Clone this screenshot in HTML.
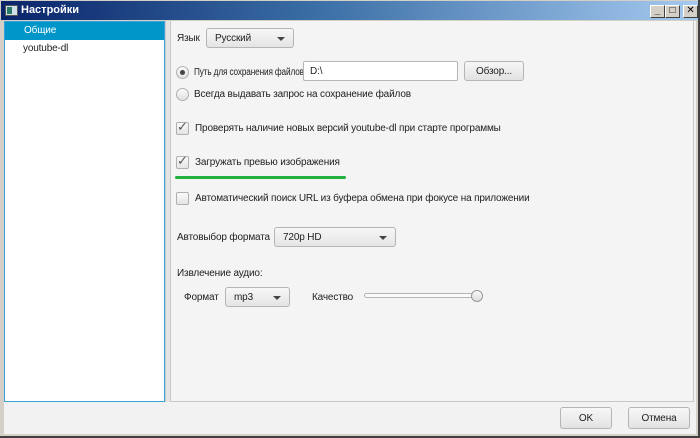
<!DOCTYPE html>
<html><head><meta charset="utf-8"><style>
*{box-sizing:border-box;margin:0;padding:0}
body{width:700px;height:438px;overflow:hidden;background:#d4d0c8;font-family:"Liberation Sans","DejaVu Sans",sans-serif;font-size:10px;letter-spacing:-0.15px;color:#222;position:relative}
.a{position:absolute}
.title{left:0;top:0;width:700px;height:20px;background:linear-gradient(90deg,#0a246a 0%,#3a6ea5 45%,#a6caf0 100%);border:1px solid #d4d0c8;border-bottom:none}
.title span{position:absolute;left:20px;top:3px;color:#fff;font-weight:bold;font-size:11px;letter-spacing:0}
.wb{top:4px;width:15px;height:13px;background:#d4d0c8;border:1px solid;border-color:#fff #404040 #404040 #fff;font-size:10px;line-height:10px;text-align:center;color:#000;font-weight:bold}
.body{left:4px;top:21px;width:692px;height:413px;background:#f2f2f2}
.list{left:4px;top:21px;width:161px;height:381px;background:#fff;border:1px solid #3aa0d8}
.sel{left:5px;top:22px;width:159px;height:18px;background:#0096c9;color:#fff;padding:3px 0 0 19px}
.panel{left:170px;top:21px;width:524px;height:381px;border:1px solid #c8c8c8;border-top:none;background:#f4f4f4}
.sep{left:165px;top:21px;width:5px;height:381px;background:#e4e4e4;border-left:1px solid #ccc}
.combo{height:20px;border:1px solid #b5b5b5;border-radius:3px;background:linear-gradient(#f7f7f7,#e4e4e4);padding:4px 8px}
.combo:after{content:"";position:absolute;right:8px;top:8px;border-left:4px solid transparent;border-right:4px solid transparent;border-top:4px solid #444}
.btn{height:22px;border:1px solid #b5b5b5;border-radius:3px;background:linear-gradient(#f7f7f7,#e2e2e2);text-align:center;padding-top:5px}
.radio{width:13px;height:13px;border-radius:50%;border:1px solid #b0b0b0;background:linear-gradient(#fafafa,#e0e0e0)}
.cb{width:13px;height:13px;border:1px solid #b0b0b0;border-radius:2px;background:linear-gradient(#fafafa,#e4e4e4)}
.t{white-space:nowrap}
</style></head><body>
<div class="a title"><span>Настройки</span>
<div class="a" style="left:4px;top:4px;width:13px;height:11px;background:#cfe0e8;border:1px solid #555"><div class="a" style="left:1px;top:1px;width:5px;height:7px;background:#2a7a6a"></div></div>
<div class="a wb" style="left:649px">_</div><div class="a wb" style="left:664px">□</div><div class="a wb" style="left:682px">✕</div>
</div>
<div class="a body"></div>
<div class="a list"></div>
<div class="a sel">Общие</div>
<div class="a t" style="left:23px;top:43px">youtube-dl</div>
<div class="a sep"></div>
<div class="a panel"></div>

<div class="a t" style="left:177px;top:33px">Язык</div>
<div class="a combo" style="left:206px;top:28px;width:88px">Русский</div>

<div class="a radio" style="left:176px;top:66px"><div class="a" style="left:3px;top:3px;width:5px;height:5px;border-radius:50%;background:#444"></div></div>
<div class="a t" style="left:194px;top:67px;transform:scaleX(0.82);transform-origin:0 0">Путь для сохранения файлов</div>
<div class="a" style="left:303px;top:61px;width:155px;height:20px;background:#fff;border:1px solid #b5b5b5;border-radius:2px;padding:4px 6px">D:\</div>
<div class="a btn" style="left:464px;top:61px;width:60px;height:20px;padding-top:4px">Обзор...</div>

<div class="a radio" style="left:176px;top:88px"></div>
<div class="a t" style="left:194px;top:89px">Всегда выдавать запрос на сохранение файлов</div>

<div class="a cb" style="left:176px;top:122px"></div><div class="a" style="left:177px;top:119px;font-size:13px;color:#555">✓</div>
<div class="a t" style="left:195px;top:123px">Проверять наличие новых версий youtube-dl при старте программы</div>

<div class="a cb" style="left:176px;top:156px"></div><div class="a" style="left:177px;top:153px;font-size:13px;color:#555">✓</div>
<div class="a t" style="left:195px;top:157px">Загружать превью изображения</div>
<div class="a" style="left:175px;top:176px;width:171px;height:3px;background:#20b040;border-radius:2px"></div>

<div class="a cb" style="left:176px;top:192px"></div>
<div class="a t" style="left:195px;top:193px">Автоматический поиск URL из буфера обмена при фокусе на приложении</div>

<div class="a t" style="left:177px;top:232px">Автовыбор формата</div>
<div class="a combo" style="left:274px;top:227px;width:122px">720p HD</div>

<div class="a t" style="left:177px;top:268px">Извлечение аудио:</div>
<div class="a t" style="left:184px;top:292px">Формат</div>
<div class="a combo" style="left:225px;top:287px;width:65px">mp3</div>
<div class="a t" style="left:312px;top:292px">Качество</div>
<div class="a" style="left:364px;top:293px;width:113px;height:5px;border:1px solid #b5b5b5;border-radius:3px;background:#fafafa"></div>
<div class="a" style="left:471px;top:290px;width:12px;height:12px;border-radius:50%;border:1px solid #999;background:linear-gradient(#fafafa,#ddd)"></div>

<div class="a btn" style="left:560px;top:407px;width:52px">OK</div>
<div class="a btn" style="left:628px;top:407px;width:62px">Отмена</div>
<div class="a" style="left:0;top:436px;width:700px;height:2px;background:#404040"></div>
<div class="a" style="left:698px;top:0;width:2px;height:438px;background:#404040"></div>
</body></html>
